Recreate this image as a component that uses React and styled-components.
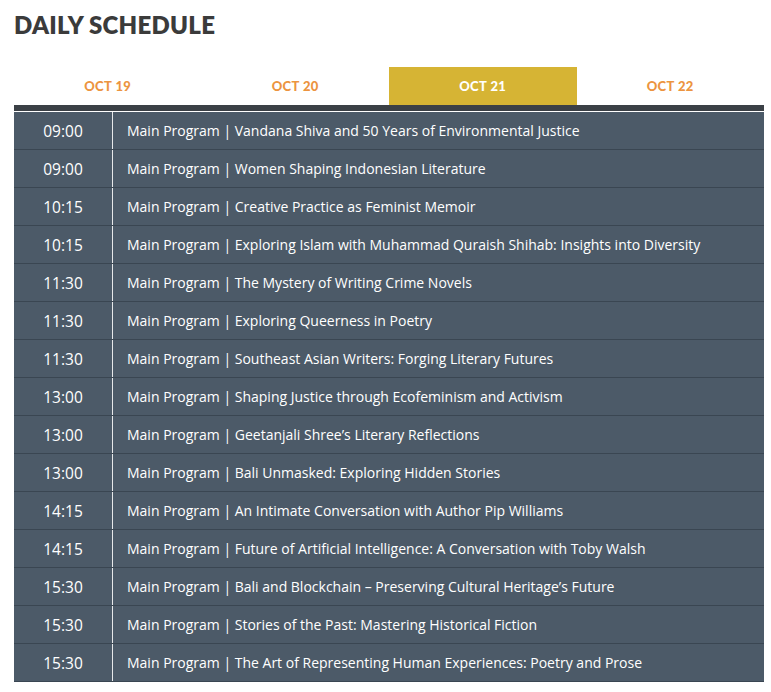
import React from "react";
import styled, { createGlobalStyle } from "styled-components";

const Global = createGlobalStyle`
  html, body { margin: 0; padding: 0; background: #ffffff; }
  body { font-family: "Open Sans", "Liberation Sans", sans-serif; }
`;

const Page = styled.div`
  width: 750px;
  padding: 12px 0 0 14px;
`;

const Title = styled.h1`
  margin: 0;
  font-family: "Lato", "Liberation Sans", sans-serif;
  font-weight: 800;
  font-size: 24px;
  line-height: 26px;
  letter-spacing: 0.3px;
  color: #3b3b3b;
`;

const Tabs = styled.div`
  display: grid;
  grid-template-columns: repeat(4, 1fr);
  margin-top: 29px;
  height: 38px;
`;

const Tab = styled.div`
  display: flex;
  align-items: center;
  justify-content: center;
  font-family: "Lato", "Liberation Sans", sans-serif;
  font-weight: 900;
  font-size: 13px;
  letter-spacing: 0.4px;
  color: ${(p) => (p.$active ? "#ffffff" : "#ec9440")};
  background: ${(p) => (p.$active ? "#d6b434" : "transparent")};
`;

const Bar = styled.div`
  height: 6px;
  background: #3b4046;
  border-bottom: 1px solid #ffffff;
`;

const Table = styled.div`
  display: flex;
  flex-direction: column;
`;

const Row = styled.div`
  display: grid;
  grid-template-columns: 99px 1fr;
  height: 37px;
  background: #4c5a68;
  border-bottom: 1px solid #3a4652;
`;

const Time = styled.div`
  display: flex;
  align-items: center;
  justify-content: center;
  border-right: 1px solid #e6e8ea;
  color: #ffffff;
  font-size: 15.5px;
`;

const Event = styled.div`
  display: flex;
  align-items: center;
  padding-left: 14px;
  color: #ffffff;
  font-size: 14px;
  white-space: nowrap;
`;

const rows = [
  ["09:00", "Vandana Shiva and 50 Years of Environmental Justice"],
  ["09:00", "Women Shaping Indonesian Literature"],
  ["10:15", "Creative Practice as Feminist Memoir"],
  ["10:15", "Exploring Islam with Muhammad Quraish Shihab: Insights into Diversity"],
  ["11:30", "The Mystery of Writing Crime Novels"],
  ["11:30", "Exploring Queerness in Poetry"],
  ["11:30", "Southeast Asian Writers: Forging Literary Futures"],
  ["13:00", "Shaping Justice through Ecofeminism and Activism"],
  ["13:00", "Geetanjali Shree’s Literary Reflections"],
  ["13:00", "Bali Unmasked: Exploring Hidden Stories"],
  ["14:15", "An Intimate Conversation with Author Pip Williams"],
  ["14:15", "Future of Artificial Intelligence: A Conversation with Toby Walsh"],
  ["15:30", "Bali and Blockchain – Preserving Cultural Heritage’s Future"],
  ["15:30", "Stories of the Past: Mastering Historical Fiction"],
  ["15:30", "The Art of Representing Human Experiences: Poetry and Prose"],
];

const tabs = ["OCT 19", "OCT 20", "OCT 21", "OCT 22"];

export default function App() {
  return (
    <>
      <Global />
      <Page>
        <Title>DAILY SCHEDULE</Title>
        <Tabs>
          {tabs.map((t) => (
            <Tab key={t} $active={t === "OCT 21"}>
              {t}
            </Tab>
          ))}
        </Tabs>
        <Bar />
        <Table>
          {rows.map(([time, title], i) => (
            <Row key={i}>
              <Time>{time}</Time>
              <Event>Main Program | {title}</Event>
            </Row>
          ))}
        </Table>
      </Page>
    </>
  );
}
